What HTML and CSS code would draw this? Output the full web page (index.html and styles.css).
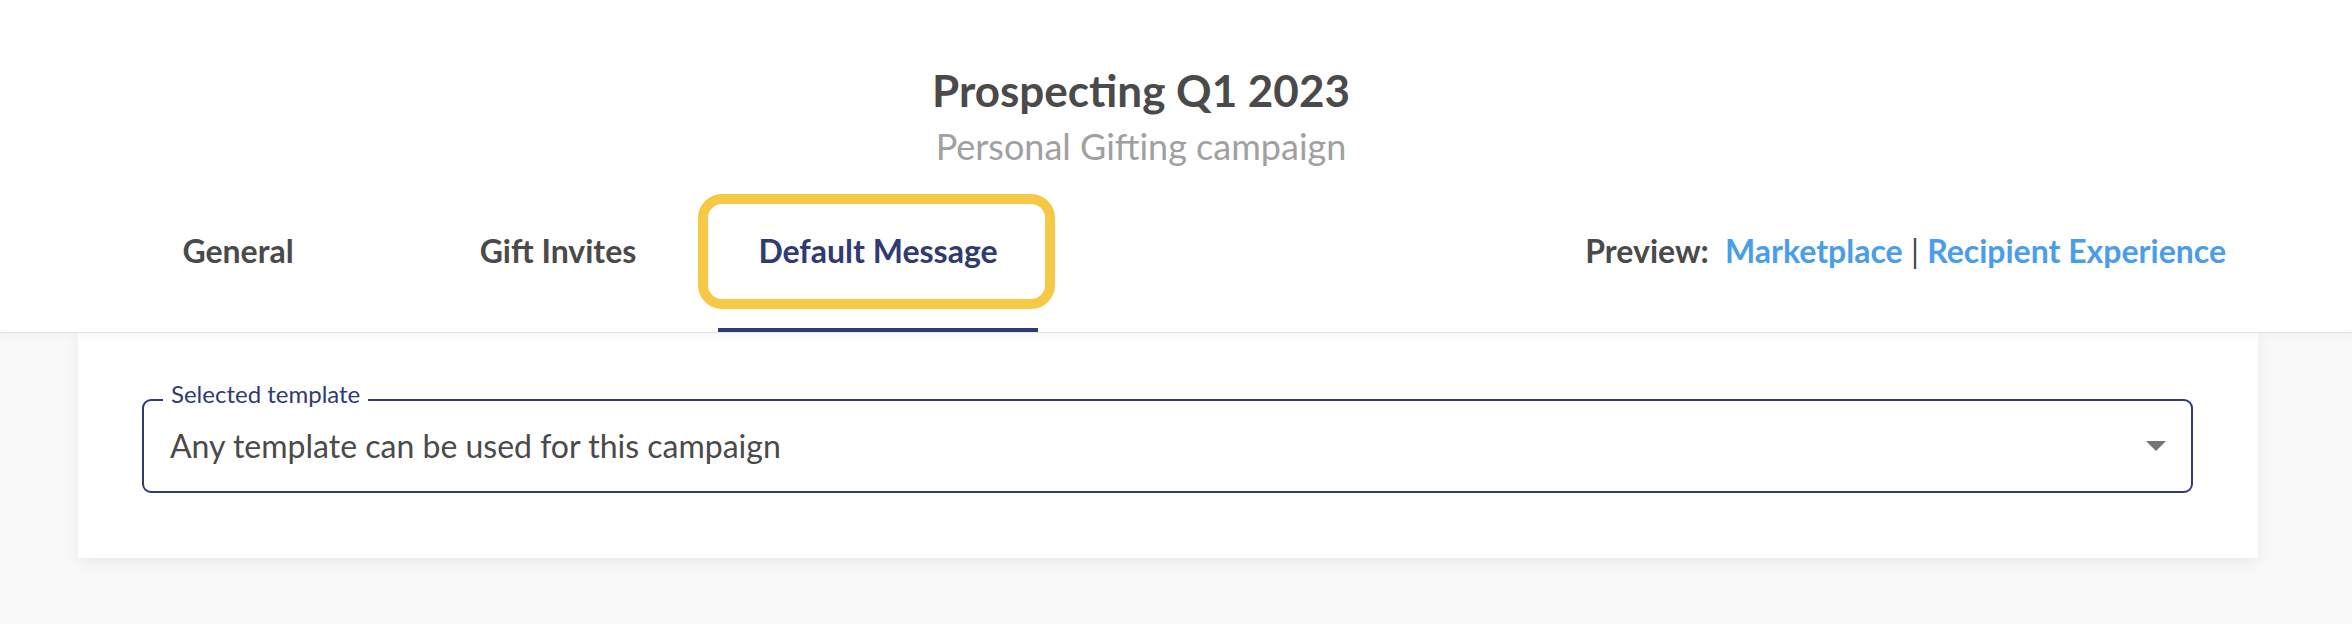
FILE: index.html
```html
<!DOCTYPE html>
<html lang="en">
<head>
<meta charset="utf-8">
<title>Prospecting Q1 2023</title>
<link rel="stylesheet" href="styles.css">
</head>
<body>
<header class="header">
  <div class="title-block">
    <h1 class="title">Prospecting Q1 2023</h1>
    <p class="subtitle">Personal Gifting campaign</p>
  </div>
  <nav class="nav">
    <a class="tab">General</a>
    <a class="tab">Gift Invites</a>
    <a class="tab tab-active">Default Message<span class="highlight"></span></a>
    <div class="preview">
      <span class="preview-label">Preview:</span>
      <a class="preview-link">Marketplace</a>
      <span class="sep">|</span>
      <a class="preview-link">Recipient Experience</a>
    </div>
  </nav>
</header>
<main class="card">
  <div class="select">
    <span class="select-label">Selected template</span>
    <span class="select-value">Any template can be used for this campaign</span>
    <svg class="select-arrow" width="20" height="10" viewBox="0 0 20 10"><path d="M0 0 L20 0 L10 10 Z" fill="#757575"/></svg>
  </div>
</main>
</body>
</html>
```
FILE: styles.css
```css
* { box-sizing: border-box; }
html, body { margin: 0; padding: 0; }
body {
  background: #f9f9f9;
  font-family: Lato, "Open Sans", "Liberation Sans", sans-serif;
  color: #4a4a4a;
  width: 2352px;
  height: 624px;
  overflow: hidden;
}
.header {
  background: #fff;
  border-bottom: 1px solid #e2e2e2;
  box-shadow: 0 2px 10px rgba(0,0,0,0.04);
  position: relative;
  z-index: 1;
}
.title-block {
  padding: 64px 70px 0 0;
  text-align: center;
}
.title {
  margin: 0;
  font-size: 44px;
  line-height: 52px;
  font-weight: 700;
  color: #4a4a4a;
}
.subtitle {
  margin: 9px 0 0;
  font-size: 36px;
  line-height: 42px;
  font-weight: 400;
  color: #a0a0a0;
}
.nav {
  display: flex;
  align-items: flex-end;
  padding: 0 126px 0 78px;
}
.tab {
  position: relative;
  width: 320px;
  text-align: center;
  padding: 65px 0 58px;
  border-bottom: 4px solid transparent;
  font-size: 32px;
  line-height: 38px;
  font-weight: 700;
  color: #4a4a4a;
}
.tab-active {
  color: #2f3b72;
  border-bottom-color: #2f3b72;
}
.highlight {
  position: absolute;
  left: -20px;
  right: -17px;
  top: 27px;
  height: 115px;
  border: 10px solid #f5c945;
  border-radius: 24px;
}
.preview {
  margin-left: auto;
  padding: 65px 0 62px;
  font-size: 32px;
  line-height: 38px;
  white-space: nowrap;
}
.preview-label {
  font-weight: 700;
  color: #4a4a4a;
  margin-right: 8px;
}
.preview-link {
  font-weight: 700;
  color: #4a9de8;
}
.sep {
  color: #4a4a4a;
  font-weight: 400;
}
.card {
  margin: 0 94px 0 78px;
  background: #fff;
  padding: 66px 65px 65px 64px;
  box-shadow: 0 4px 14px rgba(0,0,0,0.07);
}
.select {
  position: relative;
  height: 94px;
  border: 2px solid #2f3b72;
  border-radius: 9px;
  display: flex;
  align-items: center;
  padding: 0 25px 0 26px;
}
.select-label {
  position: absolute;
  left: 19px;
  top: -21px;
  padding: 0 8px;
  background: #fff;
  font-size: 24px;
  line-height: 28px;
  color: #2f3b72;
}
.select-value {
  flex: 1;
  font-size: 32px;
  line-height: 38px;
  color: #4a4a4a;
}
.select-arrow {
  display: block;
}
```
